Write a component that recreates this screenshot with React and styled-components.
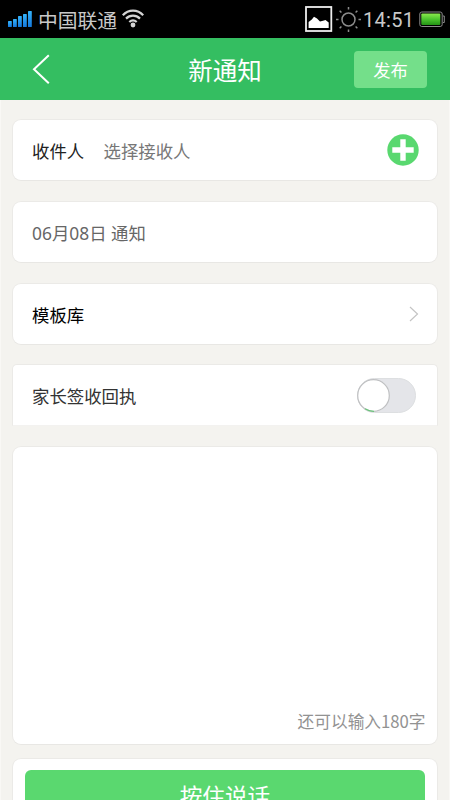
import React, { useState } from 'react'
import styled, { createGlobalStyle } from 'styled-components'

const GlobalStyle = createGlobalStyle`
  * {
    box-sizing: border-box;
  }
  body {
    margin: 0;
    background: #f4f3ef;
    overflow: hidden;
    font-family: 'Noto Sans CJK SC', sans-serif;
  }
`
const Page = styled.div`
  width: 450px;
  height: 800px;
  overflow: hidden;
  margin: 0 auto;
`
const StatusBar = styled.div`
  display: flex;
  align-items: center;
  justify-content: space-between;
  height: 38px;
  padding: 0 4px 0 8px;
  background: #000;
  color: #c9c9c9;
`
const StatusGroup = styled.div`
  display: flex;
  align-items: center;
`
const Carrier = styled.span`
  margin: 0 4px 0 6px;
  padding-top: 1px;
  font-size: 19.8px;
  line-height: 36px;
`
const Clock = styled.span`
  width: 52px;
  margin: 2px 4px 0 1px;
  font-family: Roboto, sans-serif;
  font-size: 20px;
  letter-spacing: 0.3px;
  line-height: 36px;
`
const Header = styled.div`
  display: grid;
  grid-template-columns: 96px 1fr 96px;
  align-items: center;
  height: 62px;
  background: #34be61;
`
const BackBtn = styled.button`
  display: flex;
  width: 60px;
  height: 62px;
  padding: 16px 0 0 32px;
  border: none;
  background: none;
`
const Title = styled.h1`
  margin: 0;
  padding-top: 2px;
  color: white;
  font-size: 24.5px;
  font-weight: 400;
  line-height: 60px;
  text-align: center;
`
const PublishBtn = styled.button`
  width: 73px;
  height: 37px;
  padding: 1px 0 0;
  border: none;
  border-radius: 4px;
  background: #74df8a;
  color: white;
  font-family: inherit;
  font-size: 17.3px;
  line-height: 35px;
`
const Content = styled.div`
  display: flex;
  flex-direction: column;
  gap: 19.6px;
  height: 700px;
  padding: 19.4px 11.5px 0 11.4px;
  border-left: 1px solid #f9f8f5;
  border-right: 1px solid #f9f8f5;
`
const Card = styled.div`
  display: flex;
  flex-shrink: 0;
  align-items: center;
  height: 62px;
  padding: 0 18px 0 18.6px;
  border: 1px solid #ebeae7;
  border-bottom-color: ${(props) => (props.$flat ? '#f3f2f0' : '#e8e7e4')};
  border-radius: ${(props) => (props.$flat ? '5px 5px 0 0' : '9px')};
  background: white;
`
const Label = styled.span`
  width: ${(props) => props.$width || 'auto'};
  padding-top: 2px;
  color: ${(props) => props.$color || '#222'};
  font-family: 'Noto Sans', 'Noto Sans CJK SC', sans-serif;
  font-size: 17.4px;
  line-height: 26px;
`
const Right = styled.div`
  display: flex;
  margin-left: auto;
`
const MessageCard = styled(Card)`
  align-items: flex-end;
  justify-content: flex-end;
  height: 299px;
  padding: 0 11px 10px;
`
const Counter = styled.span`
  color: #929292;
  font-size: 16.7px;
  line-height: 25px;
`
const Track = styled.button`
  display: flex;
  width: 59px;
  height: 35px;
  margin: 0 3px 0 0;
  padding: 0;
  justify-content: ${(props) => (props.$on ? 'flex-end' : 'flex-start')};
  border: 1px solid #dddfe1;
  border-radius: 18px;
  background: ${(props) => (props.$on ? '#59d86f' : '#e4e5e9')};
`
const KnobIcon = styled.svg`
  flex-shrink: 0;
  margin-left: -1px;
`
const VoiceCard = styled(Card)`
  align-items: flex-start;
  height: 90px;
  margin-top: -6.4px;
  padding: 11px 11.5px;
`
const VoiceBtn = styled.button`
  width: 100%;
  height: 54px;
  padding: 0 0 2px;
  border: none;
  border-radius: 6px;
  background: #5ad86f;
  color: white;
  font-family: inherit;
  font-size: 22.6px;
  line-height: 50px;
`

const Signal = () => (
  <svg width="24" height="18" viewBox="0 0 24 18">
    <defs>
      <linearGradient id="bars" x1="0" y1="0" x2="0" y2="1">
        <stop offset="0" stopColor="#35b4fb" />
        <stop offset="1" stopColor="#1478dc" />
      </linearGradient>
    </defs>
    {[6, 8, 11, 13, 16].map((h, i) => (
      <rect
        key={h}
        x={i * 5}
        y={17 - h}
        width="3.8"
        height={h}
        rx="0.6"
        fill="url(#bars)"
      />
    ))}
  </svg>
)

const Wifi = () => (
  <svg width="24" height="20" viewBox="0 0 24 20" fill="none">
    <g stroke="#d4d4d4" strokeWidth="2.2">
      <path d="M1.8 6.2C7.5 0 16.5 0 22.2 6.2" />
      <path d="M5 9.6c4-4 10-4 14 0" />
      <path d="M8.3 13c2.2-2 5.2-2 7.4 0" />
    </g>
    <circle cx="12" cy="16" r="2.4" fill="#d4d4d4" />
  </svg>
)

const Picture = () => (
  <svg width="30" height="26" viewBox="0 0 30 26">
    <rect x="1" y="1" width="25.3" height="24" fill="none" stroke="#eee" strokeWidth="1.8" />
    <path d="M3.6 22v-6l3.2-2.6 2.2-2.6 3 1.8 3 2.8 3-.6 2.5-.8 3.2 2.6V22z" fill="white" />
  </svg>
)

const Sun = () => (
  <svg width="27" height="27" viewBox="0 0 27 27" fill="none" stroke="#8c8c8c" strokeWidth="1.5">
    <circle cx="13.5" cy="13.5" r="6.5" />
    {[0, 45, 90, 135, 180, 225, 270, 315].map((deg) => (
      <path key={deg} d="M13.5 1v2.5" transform={`rotate(${deg} 13.5 13.5)`} />
    ))}
  </svg>
)

const Battery = () => (
  <svg width="27" height="17" viewBox="0 0 27 17">
    <defs>
      <linearGradient id="charge" x1="0" y1="0" x2="0" y2="1">
        <stop offset="0" stopColor="#8bea4e" />
        <stop offset="0.5" stopColor="#4cc52e" />
        <stop offset="1" stopColor="#239315" />
      </linearGradient>
    </defs>
    <rect x="0.8" y="1" width="22.4" height="14.5" rx="2" fill="none" stroke="#8b8b8b" />
    <path d="M24 5h1.3v6.5H24" fill="none" stroke="#8b8b8b" />
    <rect x="2.3" y="2.5" width="19" height="11.5" rx="1" fill="url(#charge)" />
  </svg>
)

const Knob = () => (
  <KnobIcon width="33" height="33" viewBox="0 0 33 33" fill="none">
    <circle cx="16.5" cy="16.5" r="15.8" fill="white" stroke="#bfc0c2" strokeWidth="1.2" />
    <path d="M8 29.8a15.8 15.8 0 0 0 9 2.5" stroke="#6cc47c" strokeWidth="1.3" />
  </KnobIcon>
)

const App = () => {
  const [receipt, setReceipt] = useState(false)

  return (
    <>
      <GlobalStyle />
      <Page>
        <StatusBar>
          <StatusGroup>
            <Signal />
            <Carrier>中国联通</Carrier>
            <Wifi />
          </StatusGroup>
          <StatusGroup>
            <Picture />
            <Sun />
            <Clock>14:51</Clock>
            <Battery />
          </StatusGroup>
        </StatusBar>
        <Header>
          <BackBtn>
            <svg width="18" height="30" viewBox="0 0 18 30" fill="none">
              <path d="M16.8 1.3 2 15.3l14.8 14" stroke="white" strokeWidth="2" />
            </svg>
          </BackBtn>
          <Title>新通知</Title>
          <PublishBtn>发布</PublishBtn>
        </Header>
        <Content>
          <Card>
            <Label $width="71.5px">收件人</Label>
            <Label $color="#777">选择接收人</Label>
            <Right>
              <svg width="32" height="32" viewBox="0 0 32 32">
                <circle cx="16" cy="16" r="15.7" fill="#59d86f" />
                <path d="M16 5.3v21.4M5.3 16h21.4" stroke="white" strokeWidth="5.4" />
              </svg>
            </Right>
          </Card>
          <Card>
            <Label $color="#666">06月08日 通知</Label>
          </Card>
          <Card>
            <Label $color="#000">模板库</Label>
            <Right>
              <svg width="10" height="16" viewBox="0 0 10 16" fill="none">
                <path d="m1 1 7.5 7L1 15" stroke="#c4c4c4" strokeWidth="1.2" />
              </svg>
            </Right>
          </Card>
          <Card $flat>
            <Label $color="#333">家长签收回执</Label>
            <Right>
              <Track $on={receipt} onClick={() => setReceipt(!receipt)}>
                <Knob />
              </Track>
            </Right>
          </Card>
          <MessageCard>
            <Counter>还可以输入180字</Counter>
          </MessageCard>
          <VoiceCard>
            <VoiceBtn>按住说话</VoiceBtn>
          </VoiceCard>
        </Content>
      </Page>
    </>
  )
}

export default App
